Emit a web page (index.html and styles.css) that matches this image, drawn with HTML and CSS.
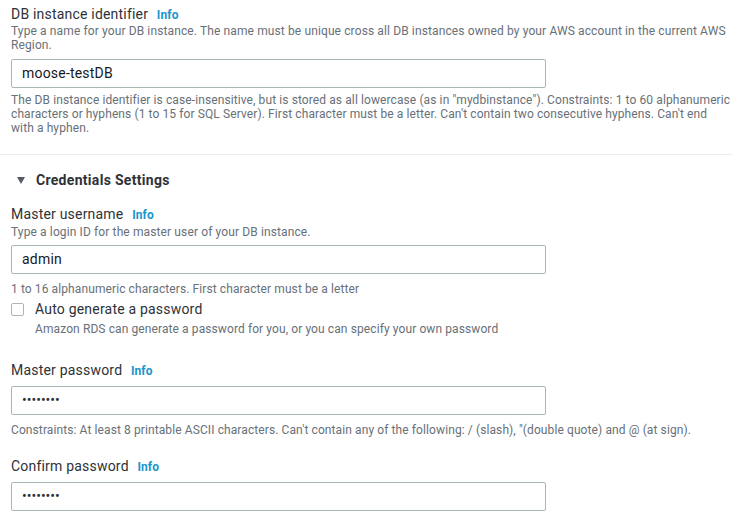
FILE: index.html
```html
<!DOCTYPE html>
<html>
<head>
<meta charset="utf-8">
<link rel="stylesheet" href="styles.css">
</head>
<body>
<section class="section first">
  <div class="label">DB instance identifier <span class="info">Info</span></div>
  <div class="desc">Type a name for your DB instance. The name must be unique cross all DB instances owned by your AWS account in the current AWS Region.</div>
  <div class="input">moose-testDB</div>
  <div class="help">The DB instance identifier is case-insensitive, but is stored as all lowercase (as in "mydbinstance"). Constraints: 1 to 60 alphanumeric characters or hyphens (1 to 15 for SQL Server). First character must be a letter. Can't contain two consecutive hyphens. Can't end with a hyphen.</div>
</section>
<section class="section second">
  <div class="heading"><span class="caret"></span>Credentials Settings</div>

  <div class="field">
    <div class="label">Master username <span class="info">Info</span></div>
    <div class="desc">Type a login ID for the master user of your DB instance.</div>
    <div class="input">admin</div>
    <div class="help">1 to 16 alphanumeric characters. First character must be a letter</div>
  </div>

  <div class="check">
    <span class="box"></span>
    <div class="check-text">
      <div class="check-label">Auto generate a password</div>
      <div class="help tight">Amazon RDS can generate a password for you, or you can specify your own password</div>
    </div>
  </div>

  <div class="field pw">
    <div class="label">Master password <span class="info">Info</span></div>
    <div class="input dots">••••••••</div>
    <div class="help">Constraints: At least 8 printable ASCII characters. Can't contain any of the following: / (slash), "(double quote) and @ (at sign).</div>
  </div>

  <div class="field pw2">
    <div class="label">Confirm password <span class="info">Info</span></div>
    <div class="input dots">••••••••</div>
  </div>
</section>
</body>
</html>
```
FILE: styles.css
```css
html, body {
  margin: 0;
  padding: 0;
  background: #ffffff;
}
body {
  font-family: Roboto, "Liberation Sans", sans-serif;
  color: #16191f;
  width: 732px;
  overflow: hidden;
}
.section {
  padding: 0 0 0 11px;
}
.first {
  padding-top: 5px;
  padding-bottom: 19px;
  border-bottom: 1px solid #eaeded;
}
.label {
  font-size: 14px;
  line-height: 18px;
  letter-spacing: 0.2px;
  color: #2e3237;
}
.info {
  font-size: 12px;
  font-weight: 700;
  letter-spacing: 0.1px;
  color: #1b94cc;
  margin-left: 5px;
}
.desc {
  font-size: 12px;
  line-height: 14px;
  letter-spacing: 0.12px;
  color: #687078;
}
.input {
  box-sizing: border-box;
  width: 535px;
  height: 29px;
  margin-top: 7px;
  border: 1px solid #aab7b8;
  border-radius: 2px;
  padding: 0 10px;
  font-size: 14px;
  line-height: 27px;
  letter-spacing: 0.2px;
  color: #16191f;
}
.help {
  font-size: 12px;
  line-height: 14px;
  letter-spacing: 0.1px;
  color: #687078;
  margin-top: 5px;
}
.heading {
  margin-top: 15px;
  font-size: 14px;
  line-height: 20px;
  font-weight: 700;
  letter-spacing: 0.3px;
  color: #2e3237;
  display: flex;
  align-items: center;
}
.caret {
  width: 0;
  height: 0;
  border-left: 4.5px solid transparent;
  border-right: 4.5px solid transparent;
  border-top: 7px solid #545b64;
  margin-left: 6px;
  margin-right: 11px;
}
.field {
  margin-top: 15px;
}
.field .desc {
  margin-top: 1px;
}
.field .input {
  margin-top: 6px;
}
.field .help {
  margin-top: 8px;
}
.check {
  display: flex;
  align-items: flex-start;
  margin-top: 5px;
}
.box {
  box-sizing: border-box;
  width: 13px;
  height: 13px;
  border: 1px solid #aab7b8;
  border-radius: 2px;
  margin-top: 2px;
  margin-right: 11px;
  flex: none;
}
.check-label {
  font-size: 14px;
  line-height: 17px;
  letter-spacing: 0.2px;
  color: #2e3237;
}
.help.tight {
  margin-top: 4px;
}
.pw {
  margin-top: 25px;
}
.pw2 {
  margin-top: 20px;
}
.dots {
  font-size: 14px;
  letter-spacing: 0;
  color: #2e3237;
}
```
